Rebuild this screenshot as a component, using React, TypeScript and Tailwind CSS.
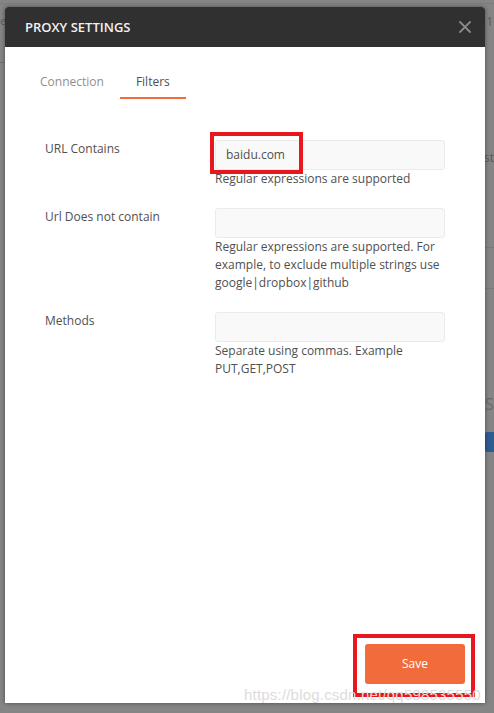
import React from "react";

type Field = {
  label: string;
  value?: string;
  help: React.ReactNode;
  marked?: boolean;
};

const fields: Field[] = [
  {
    label: "URL Contains",
    value: "baidu.com",
    help: "Regular expressions are supported",
    marked: true,
  },
  {
    label: "Url Does not contain",
    help: (
      <>
        Regular expressions are supported. For
        <br />
        example, to exclude multiple strings use
        <br />
        google|dropbox|github
      </>
    ),
  },
  {
    label: "Methods",
    help: (
      <>
        Separate using commas. Example
        <br />
        PUT,GET,POST
      </>
    ),
  },
];

function CloseIcon() {
  return (
    <svg width="12" height="12" viewBox="0 0 12 12" fill="none" stroke="#8c8c8c" strokeWidth="1.8" strokeLinecap="square">
      <path d="M1 1L11 11M11 1L1 11" />
    </svg>
  );
}

// red highlight frame drawn on top of a control
function Marker({ className }: { className: string }) {
  return <div className={`pointer-events-none absolute border-4 border-[#e8161d] ${className}`} />;
}

export default function App() {
  return (
    <div className="relative h-[713px] w-[494px] overflow-hidden bg-[#858585] font-['Open_Sans',sans-serif]">
      {/* bits of the page behind the overlay */}
      <div className="absolute left-0 top-[3px] h-px w-full bg-[#7c7c7c]" />
      <span className="absolute left-0 top-[13px] text-[11px] text-[#5c5c5c]">e</span>
      <span className="absolute left-[486px] top-[12px] text-[13px] text-[#5c5c5c]">1</span>
      <div className="absolute left-0 top-[62px] h-px w-[5px] bg-[#6f6f6f]" />
      <span className="absolute left-[484px] top-[149px] text-[12px] text-[#5a5a5a]">st</span>
      <div className="absolute left-[485px] top-[247px] h-px w-[9px] bg-[#7a7a7a]" />
      <div className="absolute left-[485px] top-[288px] h-px w-[9px] bg-[#7a7a7a]" />
      <span className="absolute left-[485px] top-[392px] text-[16px] text-[#6a6a6a]">S</span>
      <div className="absolute left-[485px] top-[432px] h-[20px] w-[12px] rounded-l-[2px] bg-[#2f5c92]" />

      {/* modal */}
      <div className="relative ml-[5px] mt-[7px] flex h-[696px] w-[480px] flex-col rounded-t-[3px] bg-white shadow-[0_0_4px_rgba(0,0,0,0.45)]">
        <div className="flex h-[40px] items-center justify-between rounded-t-[3px] bg-[#303030] pl-[20px] pr-[14px]">
          <span className="pt-[1px] text-[13px] font-semibold text-[#f0f0f0]">PROXY SETTINGS</span>
          <CloseIcon />
        </div>

        <div className="flex pl-[19px] pt-[26px]">
          <div className="border-b-2 border-transparent px-4 pb-[6px] text-[12px] leading-[18px] text-[#909090]">Connection</div>
          <div className="border-b-2 border-[#f26b3a] px-4 pb-[6px] text-[12px] leading-[18px] text-[#505050]">Filters</div>
        </div>

        <div className="flex flex-col gap-[18px] px-[40px] pt-[39px]">
          {fields.map((f) => (
            <div key={f.label} className="flex text-[12px] leading-[18px] text-[#505050]">
              <div className="w-[170px] shrink-0 pt-[2px]">{f.label}</div>
              <div className="flex-1 pt-[2px]">
                <div className="relative h-[30px] rounded-[3px] border border-[#ebebeb] bg-[#f9f9f9] px-[10px] text-[12px] leading-[28px] text-[#505050]">
                  {f.value}
                  {f.marked && <Marker className="-left-[6px] -top-[9px] h-[42px] w-[93px]" />}
                </div>
                <div>{f.help}</div>
              </div>
            </div>
          ))}
        </div>

        <div className="flex-1" />

        <div className="flex justify-end pb-[19px] pr-[20px]">
          <div className="relative">
            <button className="h-[40px] w-[100px] rounded-[3px] bg-[#f26b3a] text-[12px] text-white">Save</button>
            <Marker className="-left-[12px] -top-[10px] h-[63px] w-[122px]" />
          </div>
        </div>
      </div>

      {/* blog watermark */}
      <span className="pointer-events-none absolute left-[244px] top-[684px] font-['Liberation_Sans',sans-serif] text-[15px] tracking-[0.2px] text-[#dcdcdc]">
        https://blog.csdn.net/qq598535550
      </span>
    </div>
  );
}
